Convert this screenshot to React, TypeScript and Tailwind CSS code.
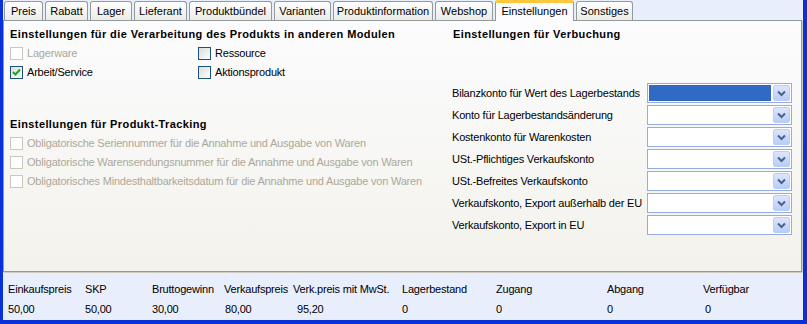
import React from "react";

const tabs = [
  { label: "Preis", w: "w-[39px]" },
  { label: "Rabatt", w: "w-[43px]" },
  { label: "Lager", w: "w-[42px]" },
  { label: "Lieferant", w: "w-[53px]" },
  { label: "Produktbündel", w: "w-[83px]" },
  { label: "Varianten", w: "w-[57px]" },
  { label: "Produktinformation", w: "w-[100px]" },
  { label: "Webshop", w: "w-[58px]" },
  { label: "Einstellungen", w: "w-[79px]", active: true },
  { label: "Sonstiges", w: "w-[57px]" },
];

const accounts = [
  { label: "Bilanzkonto für Wert des Lagerbestands", selected: true },
  { label: "Konto für Lagerbestandsänderung" },
  { label: "Kostenkonto für Warenkosten" },
  { label: "USt.-Pflichtiges Verkaufskonto" },
  { label: "USt.-Befreites Verkaufskonto" },
  { label: "Verkaufskonto, Export außerhalb der EU" },
  { label: "Verkaufskonto, Export in EU" },
];

const totals = [
  { label: "Einkaufspreis", value: "50,00", w: "w-[77px]", vp: "pl-0" },
  { label: "SKP", value: "50,00", w: "w-[67px]", vp: "pl-0" },
  { label: "Bruttogewinn", value: "30,00", w: "w-[72px]", vp: "pl-0" },
  { label: "Verkaufspreis", value: "80,00", w: "w-[69px]", vp: "pl-[1px]" },
  { label: "Verk.preis mit MwSt.", value: "95,20", w: "w-[109px]", vp: "pl-[4px]" },
  { label: "Lagerbestand", value: "0", w: "w-[94px]", vp: "pl-0" },
  { label: "Zugang", value: "0", w: "w-[111px]", vp: "pl-0" },
  { label: "Abgang", value: "0", w: "w-[96px]", vp: "pl-0" },
  { label: "Verfügbar", value: "0", w: "w-[90px]", vp: "pl-[2px]" },
];

const Checkbox = ({ label, checked, disabled }: { label: string; checked?: boolean; disabled?: boolean }) => (
  <div className="flex h-[19px] items-center gap-[4px]">
    <span
      className={
        disabled
          ? "flex h-[13px] w-[13px] shrink-0 items-center justify-center border border-[#cac8bb] bg-white"
          : "flex h-[13px] w-[13px] shrink-0 items-center justify-center border border-[#1c5180] bg-gradient-to-br from-[#dcdcd7] to-white"
      }
    >
      {checked && (
        <svg width="9" height="9" viewBox="0 0 9 9">
          <path d="M1 4 L3.5 6.5 L8 1.5" fill="none" stroke="#21a121" strokeWidth="2" />
        </svg>
      )}
    </span>
    <span className={disabled ? "text-[#aca899] whitespace-nowrap" : "text-black whitespace-nowrap"}>{label}</span>
  </div>
);

const Combo = ({ selected }: { selected?: boolean }) => (
  <div className="flex h-[20px] w-[145px] shrink-0 items-center border border-[#94acdf] bg-white p-[1px]">
    <div className={selected ? "h-full flex-1 bg-[#316ac5]" : "h-full flex-1"} />
    <div className="ml-[2px] flex h-full w-[17px] items-center justify-center rounded-[2px] border border-[#bccdf5] bg-gradient-to-b from-[#dbe6fe] to-[#b9cdf8]">
      <svg width="9" height="7" viewBox="0 0 9 7">
        <path d="M1 1.5 L4.5 5 L8 1.5" fill="none" stroke="#4d6185" strokeWidth="2" />
      </svg>
    </div>
  </div>
);

export default function App() {
  return (
    <div className="flex h-[324px] w-[807px] flex-col overflow-hidden border-b-[4px] border-l-[3px] border-r-[4px] border-[#0831d9] bg-[#e8eefc] font-['Liberation_Sans',sans-serif] text-[11px] leading-[13px] text-black">
      <div className="relative z-10 flex h-[20px] items-end gap-[2px] pl-[1px]">
        {tabs.map(t =>
          t.active ? (
            <div
              key={t.label}
              className={`${t.w} -mb-[1px] flex h-[21px] items-center justify-center rounded-t-[3px] border-x border-t-[3px] border-x-[#919b9c] border-t-[#ffc83c] bg-[#fcfcfe] pb-[1px]`}
            >
              {t.label}
            </div>
          ) : (
            <div
              key={t.label}
              className={`${t.w} flex h-[19px] items-center justify-center rounded-t-[3px] border border-b-0 border-[#919b9c] bg-gradient-to-b from-white to-[#ecebe6] pt-[1px]`}
            >
              {t.label}
            </div>
          )
        )}
      </div>

      <div className="mr-[1px] flex h-[252px] border border-[#919b9c] bg-gradient-to-b from-[#fcfcfe] to-[#f3f2ec] shadow-[1px_1px_0_#d0cec2] tracking-[-0.2px]">
        <div className="w-[445px] pl-[6px] pt-[4px]">
          <div className="flex h-[19px] items-center font-bold tracking-[0.4px] whitespace-nowrap">
            Einstellungen für die Verarbeitung des Produkts in anderen Modulen
          </div>
          <div className="grid grid-cols-[188px_1fr]">
            <Checkbox label="Lagerware" disabled />
            <Checkbox label="Ressource" />
            <Checkbox label="Arbeit/Service" checked />
            <Checkbox label="Aktionsprodukt" />
          </div>
          <div className="mt-[33px] flex h-[19px] items-center font-bold tracking-[0.4px]">Einstellungen für Produkt-Tracking</div>
          <Checkbox label="Obligatorische Seriennummer für die Annahme und Ausgabe von Waren" disabled />
          <Checkbox label="Obligatorische Warensendungsnummer für die Annahme und Ausgabe von Waren" disabled />
          <Checkbox label="Obligatorisches Mindesthaltbarkeitsdatum für die Annahme und Ausgabe von Waren" disabled />
        </div>

        <div className="flex-1 pt-[4px]">
          <div className="flex h-[19px] items-center pl-[4px] font-bold tracking-[0.4px]">Einstellungen für Verbuchung</div>
          <div className="mt-[39px] flex flex-col gap-[2px]">
            {accounts.map(a => (
              <div key={a.label} className="flex h-[20px] items-center justify-between pr-[9px] pl-[3px]">
                <span className="whitespace-nowrap">{a.label}</span>
                <Combo selected={a.selected} />
              </div>
            ))}
          </div>
        </div>
      </div>

      <div className="flex pl-[5px] pt-[11px] tracking-[-0.2px]">
        {totals.map(t => (
          <div key={t.label} className={`${t.w} flex flex-col gap-[7px]`}>
            <span className="whitespace-nowrap">{t.label}</span>
            <span className={t.vp}>{t.value}</span>
          </div>
        ))}
      </div>
    </div>
  );
}
